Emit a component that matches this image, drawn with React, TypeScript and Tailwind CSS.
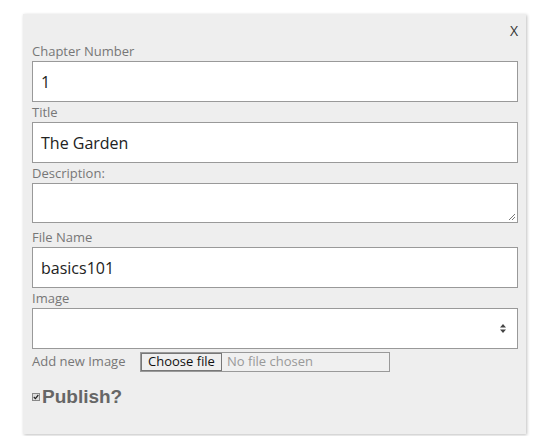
import React from 'react';

const Label: React.FC<{ children: React.ReactNode }> = ({ children }) => (
  <div className="h-[20px] text-[13px] leading-[20px] text-[#777]">{children}</div>
);

const TextField: React.FC<{ value?: string }> = ({ value }) => (
  <div className="flex h-[41px] items-center border border-[#999] bg-white px-[8px] text-[16px] text-[#222]">
    {value}
  </div>
);

export default function App() {
  return (
    <div className="min-h-[436px] bg-white pt-[14px]" style={{ fontFamily: '"Open Sans", sans-serif' }}>
      <div className="ml-[23px] h-[420px] w-[503px] bg-[#eeeeee] pl-[9px] pr-[8px] pt-[7px] shadow-[1px_1px_3px_rgba(0,0,0,0.25)]">
        <div className="flex h-[20px] justify-end text-[14px] leading-[20px] text-[#333]">X</div>

        <Label>Chapter Number</Label>
        <TextField value="1" />

        <Label>Title</Label>
        <TextField value="The Garden" />

        <Label>Description:</Label>
        <div className="relative h-[40px] border border-[#999] bg-white">
          <svg className="absolute bottom-[1px] right-[1px]" width="8" height="8" viewBox="0 0 8 8">
            <path d="M7 1 L1 7 M7 4 L4 7" stroke="#777" strokeWidth="1" />
          </svg>
        </div>
        <div className="h-[4px]" />

        <Label>File Name</Label>
        <TextField value="basics101" />

        <Label>Image</Label>
        <div className="flex h-[41px] items-center justify-end border border-[#999] bg-white pr-[11px]">
          <svg width="6" height="9" viewBox="0 0 6 9">
            <path d="M3 0 L6 3.5 L0 3.5 Z M3 9 L6 5.5 L0 5.5 Z" fill="#444" />
          </svg>
        </div>

        <div className="mt-[3px] flex items-start">
          <div className="w-[108px] text-[13px] leading-[18px] text-[#777]">Add new Image</div>
          <div className="flex h-[20px] w-[250px] items-stretch border border-[#999] bg-[#f0f0f0] text-[13px]">
            <div className="flex items-center border border-[#777] bg-[#efefef] px-[6px] text-[#111]">Choose file</div>
            <div className="flex items-center pl-[5px] text-[#999]">No file chosen</div>
          </div>
        </div>

        <div className="mt-[14px] flex items-center">
          <span className="mr-[2px] flex h-[8px] w-[8px] items-center justify-center border border-[#888] bg-[#ddd]">
            <svg width="6" height="6" viewBox="0 0 6 6">
              <path d="M0.8 3 L2.4 4.6 L5.3 1" stroke="#222" strokeWidth="1.2" fill="none" />
            </svg>
          </span>
          <span className="text-[19px] font-bold leading-[22px] text-[#666]" style={{ fontFamily: '"Liberation Sans", Arial, sans-serif' }}>
            Publish?
          </span>
        </div>
      </div>
    </div>
  );
}
